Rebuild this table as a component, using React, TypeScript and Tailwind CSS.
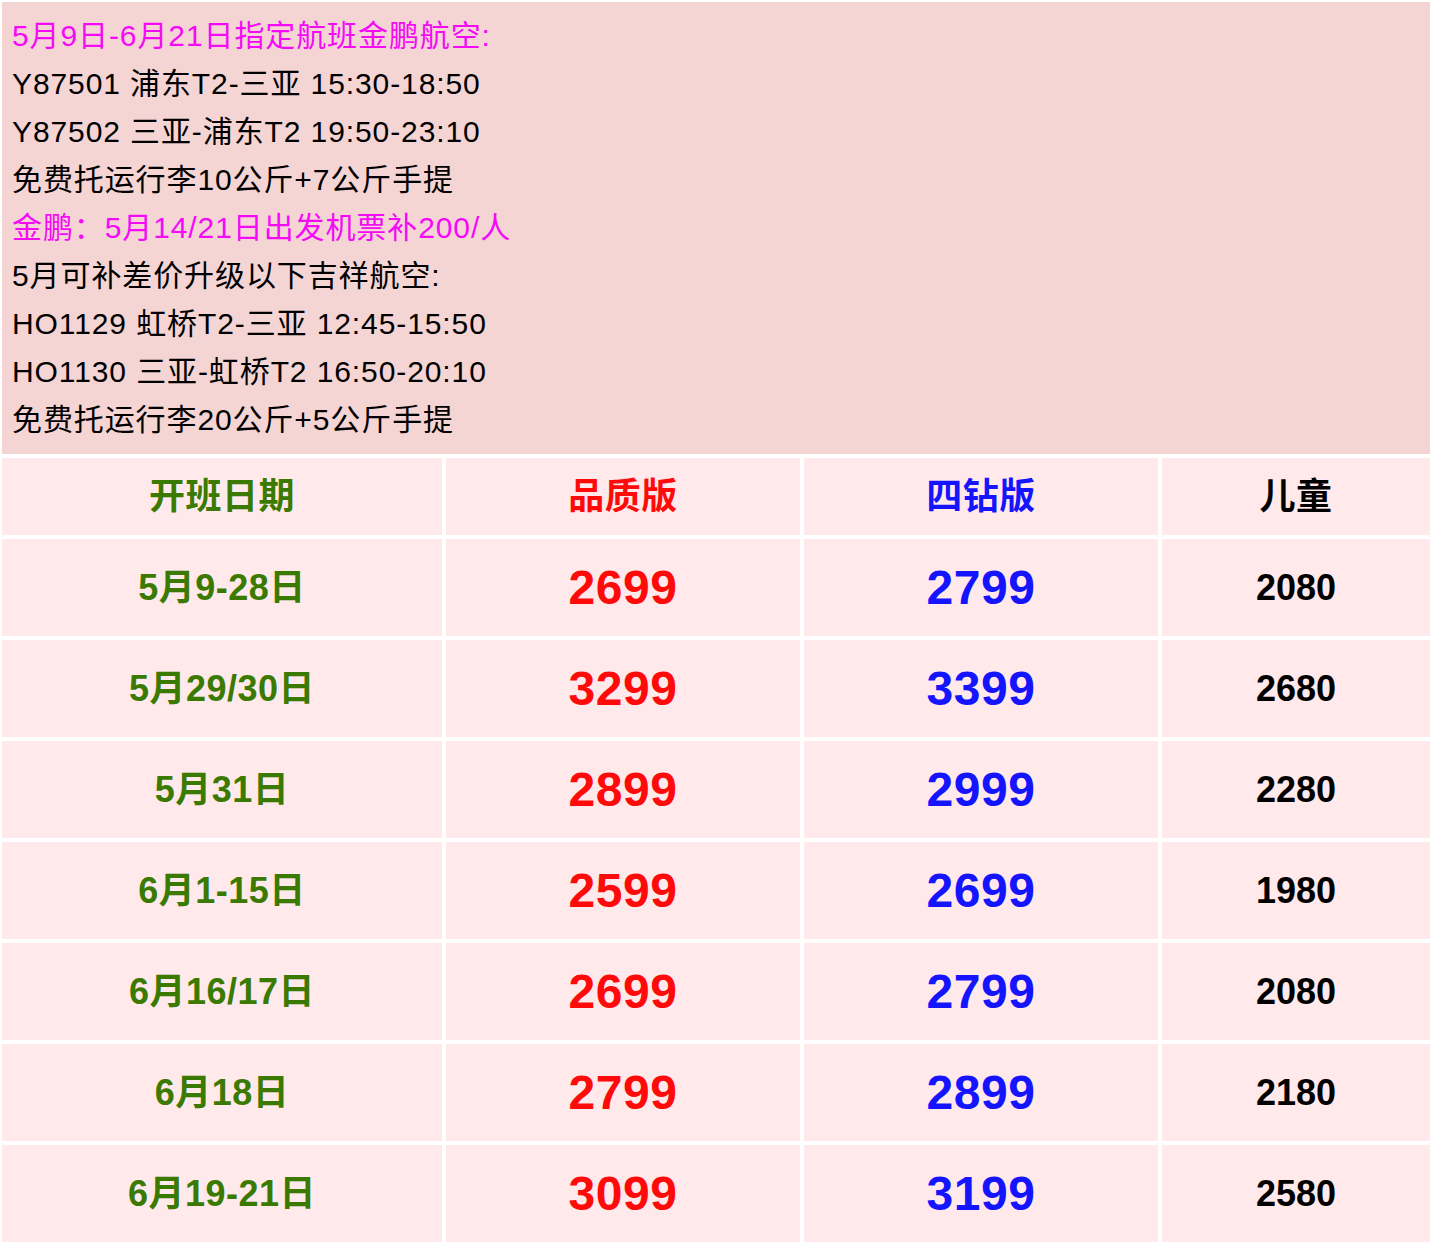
import React from "react";

const latin = { fontFamily: '"Liberation Sans", Arial, "Noto Sans CJK SC", sans-serif' };

const rows = [
  ["5月9-28日", "2699", "2799", "2080"],
  ["5月29/30日", "3299", "3399", "2680"],
  ["5月31日", "2899", "2999", "2280"],
  ["6月1-15日", "2599", "2699", "1980"],
  ["6月16/17日", "2699", "2799", "2080"],
  ["6月18日", "2799", "2899", "2180"],
  ["6月19-21日", "3099", "3199", "2580"],
];

const info: { text: string; magenta?: boolean }[] = [
  { text: "5月9日-6月21日指定航班金鹏航空:", magenta: true },
  { text: "Y87501 浦东T2-三亚 15:30-18:50" },
  { text: "Y87502 三亚-浦东T2 19:50-23:10" },
  { text: "免费托运行李10公斤+7公斤手提" },
  { text: "金鹏：5月14/21日出发机票补200/人", magenta: true },
  { text: "5月可补差价升级以下吉祥航空:" },
  { text: "HO1129 虹桥T2-三亚 12:45-15:50" },
  { text: "HO1130 三亚-虹桥T2 16:50-20:10" },
  { text: "免费托运行李20公斤+5公斤手提" },
];

export default function App() {
  return (
    <div className="bg-white min-h-[1255px] w-[1441px] p-[2px]" style={latin}>
      <div className="w-[1428px] bg-[#f5d4d4] pt-[10px] pb-[10px] pl-[10px]">
        {info.map((l, i) => (
          <div
            key={i}
            className={`h-[48px] leading-[48px] text-[30px] tracking-[0.9px] whitespace-nowrap ${l.magenta ? "text-[#f50af5]" : "text-black"}`}
          >
            {l.text}
          </div>
        ))}
      </div>
      <div className="mt-[4px] grid grid-cols-[440px_354px_354px_268px] gap-[4px] font-bold">
        <div className="h-[77px] bg-[#ffe9eb] flex items-center justify-center text-[36px] tracking-[0.5px] text-[#3a7a00]">开班日期</div>
        <div className="h-[77px] bg-[#ffe9eb] flex items-center justify-center text-[36px] tracking-[0.5px] text-[#ff0a0a]">品质版</div>
        <div className="h-[77px] bg-[#ffe9eb] flex items-center justify-center text-[36px] tracking-[0.5px] text-[#1414ff]">四钻版</div>
        <div className="h-[77px] bg-[#ffe9eb] flex items-center justify-center text-[36px] tracking-[0.5px] text-black">儿童</div>
        {rows.map((r, i) => (
          <React.Fragment key={i}>
            <div className="h-[97px] bg-[#ffe9eb] flex items-center justify-center text-[36px] tracking-[0.5px] text-[#3a7a00]">{r[0]}</div>
            <div className="h-[97px] bg-[#ffe9eb] flex items-center justify-center text-[48px] tracking-[0.5px] text-[#ff0a0a]">{r[1]}</div>
            <div className="h-[97px] bg-[#ffe9eb] flex items-center justify-center text-[48px] tracking-[0.5px] text-[#1414ff]">{r[2]}</div>
            <div className="h-[97px] bg-[#ffe9eb] flex items-center justify-center text-[36px] text-black">{r[3]}</div>
          </React.Fragment>
        ))}
      </div>
    </div>
  );
}
